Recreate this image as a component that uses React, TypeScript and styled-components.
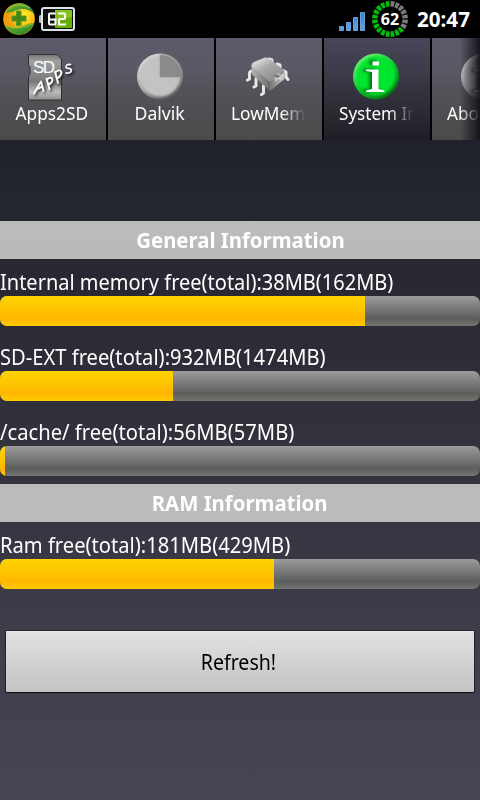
import React from 'react';
import styled, { createGlobalStyle } from 'styled-components';

const Global = createGlobalStyle`
  * { box-sizing: border-box; }
  body { margin: 0; background: #22242c; overflow: hidden; }
`;

const Screen = styled.main`
  width: 480px;
  height: 800px;
  display: flex;
  flex-direction: column;
  overflow: hidden;
  color: #fff;
  font-family: 'Noto Sans', 'Open Sans', sans-serif;
  background: linear-gradient(#20212a 140px, #24272d 210px, #292832 270px, #2d2d37 360px, #33323d 450px, #373743 540px, #3e3c48 620px, #434350 735px, #464454 800px);
`;

const StatusBar = styled.header`
  height: 38px;
  flex: none;
  display: flex;
  align-items: center;
  justify-content: space-between;
  background: #000;
`;

const StatusGroup = styled.div<{ $gap?: number }>`
  display: flex;
  gap: ${(p) => p.$gap ?? 0}px;
  height: 38px;
  align-items: flex-start;
`;

const Clock = styled.time`
  width: 55px;
  margin: 0 8px 0 3px;
  font: 700 20.6px/38px 'Noto Sans', sans-serif;
  white-space: nowrap;
`;

const TabStrip = styled.nav`
  height: 102px;
  flex: none;
  display: flex;
  gap: 2px;
  background: #000;
  overflow: hidden;
  position: relative;
  &::after {
    content: '';
    position: absolute;
    top: 0;
    right: 0;
    width: 20px;
    height: 102px;
    background: linear-gradient(90deg, rgba(0, 0, 0, 0), rgba(16, 17, 23, 0.95));
  }
`;

const Tab = styled.a<{ $active?: boolean }>`
  width: 106px;
  height: 102px;
  flex: none;
  padding: 14px 16px 0 14px;
  display: flex;
  flex-direction: column;
  align-items: center;
  background: ${(p) =>
    p.$active
      ? 'linear-gradient(#48465a, #3a3a47 38%, #2c2c35 70%, #1d1e25)'
      : 'linear-gradient(#5b596a, #595a65 28%, #515157 55%, #4b4b4c)'};
`;

const TabLabel = styled.span<{ $fade?: boolean }>`
  width: 76px;
  height: 24px;
  margin-top: -1px;
  padding-left: ${(p) => (p.$fade ? 1 : 0)}px;
  display: flex;
  justify-content: ${(p) => (p.$fade ? 'flex-start' : 'center')};
  overflow: hidden;
  font-size: 18px;
  line-height: 24px;
  white-space: nowrap;
  mask-image: ${(p) => (p.$fade ? 'linear-gradient(90deg, #000 51px, transparent 76px)' : 'none')};
`;

const Squeeze = styled.span<{ $scale: number; $origin?: string }>`
  display: inline-block;
  white-space: nowrap;
  transform: scaleX(${(p) => p.$scale});
  transform-origin: ${(p) => p.$origin ?? 'left'} center;
`;

const Content = styled.section`
  padding-top: 81px;
  display: flex;
  flex-direction: column;
`;

const SectionTitle = styled.h2<{ $tint?: boolean }>`
  height: 38px;
  margin: 0;
  text-align: center;
  font-size: 21px;
  font-weight: 700;
  line-height: 38px;
  background: ${(p) => (p.$tint ? 'linear-gradient(#babdba, #bbbcbb 45%, #bcb9bd 60%, #bcb9bd)' : '#bcbabd')};
`;

const Meter = styled.div`
  height: 75px;
  padding-top: 8px;
`;

const MeterLabel = styled.div`
  height: 29px;
  font-size: 22px;
  line-height: 29px;
`;

const Track = styled.div`
  height: 30px;
  border-radius: 7px;
  overflow: hidden;
  background: linear-gradient(#9b9c9b, #7d7f7c 35%, #5b5e5a 75%, #727570);
`;

const Fill = styled.div`
  height: 30px;
  background: linear-gradient(#ffd300, #ffc600 40%, #ffb600 75%, #ffcb00);
`;

const RefreshButton = styled.button`
  height: 61px;
  margin: 34px 6px 0;
  padding: 0 3px 0 0;
  border: 0;
  border-radius: 1px;
  color: #000;
  font: 400 21.500px/62px 'Noto Sans', sans-serif;
  background: linear-gradient(#e1e0e2, #d7d8d7 35%, #cbcccb 70%, #c3c4c6);
  box-shadow: 0 1px 1px #101015, 0 0 1px 1px #25252d, inset 0 1px #e9e7e9;
`;

const Ring = () => (
  <svg width="38" height="38" viewBox="0 0 38 38">
    {Array.from({ length: 20 }, (_, i) => (
      <path
        key={i}
        d="M16.900 1.200Q19 .8 21.100 1.200L20.500 6.600H17.500Z"
        fill={i < 7 ? '#7d7b7d' : '#00bd08'}
        transform={`rotate(${9 + i * 18} 19 19)`}
      />
    ))}
    <text x="19" y="25" textAnchor="middle" fontSize="16" fontWeight="700" fill="#fff" fontFamily="Noto Sans">62</text>
  </svg>
);

const Signal = () => (
  <svg width="27" height="38" viewBox="0 0 27 38">
    <defs>
      <linearGradient id="signal" x2="0" y2="1">
        <stop stopColor="#2f83dc" />
        <stop offset="1" stopColor="#5aa4e8" />
      </linearGradient>
    </defs>
    <g fill="url(#signal)" stroke="#6c9fd6" strokeWidth="1">
      <path d="M.5 26.500h4v4h-4zM7.500 22.500h4v8h-4zM14.500 17.500h4v13h-4zM21.500 12.500h4v18h-4z" />
    </g>
  </svg>
);

const Guard = () => (
  <svg width="38" height="38" viewBox="0 0 38 38">
    <defs>
      <radialGradient id="gold" cx=".65" cy=".4">
        <stop stopColor="#fff02a" />
        <stop offset=".6" stopColor="#ffc313" />
        <stop offset="1" stopColor="#f29c0c" />
      </radialGradient>
      <linearGradient id="leaf" x2="1" y2="1">
        <stop stopColor="#74b832" />
        <stop offset="1" stopColor="#1e7e26" />
      </linearGradient>
    </defs>
    <circle cx="19" cy="19" r="15.800" fill="url(#gold)" />
    <path d="M8 9C14 2 24 1 31 8Q34 11 34.500 14C29 9 23 8 17 10Q11 13 6 13Z" fill="url(#leaf)" />
    <path d="M5 25Q12 29 20 27C27 25 30 23 34 23C31 33 21 37 12 33Q7 30 5 25Z" fill="url(#leaf)" />
    <path d="M9 9Q19 1 30 8M7 26Q19 31 33 23.500" fill="none" stroke="#a5cf3c" strokeWidth=".8" />
    <path d="M16.500 11h4.500v5h5v5h-5v4.500h-4.500V21h-4.500v-5h4.500z" fill="#438719" stroke="#5a9a1b" strokeWidth="1" strokeLinejoin="round" />
  </svg>
);

const Battery = () => (
  <svg width="38" height="38" viewBox="0 0 38 38">
    <rect x="1" y="15" width="4" height="8" rx="1.500" fill="#b8c4cc" />
    <rect x="4" y="8" width="32" height="22" rx="2" fill="#111" stroke="#dce4ea" strokeWidth="2" />
    <path d="M17 10h17v18H17z" fill="#67ad08" />
    <path d="M17 10h17v7l-17 4z" fill="#82c51b" />
    <path d="M17.500 13.500H12q-1 0-1 1v9q0 1 1 1h4.500q1 0 1-1v-4H11.500M20 13.500h6q1 0 1 1V18q0 1-1 1h-4q-1 0-1 1v4.500h7" fill="none" stroke="#fff" strokeWidth="2" />
  </svg>
);

const SdIcon = () => (
  <svg width="48" height="50" viewBox="0 0 48 50">
    <defs>
      <linearGradient id="card" x2="0" y2="1">
        <stop stopColor="#777" />
        <stop offset=".15" stopColor="#a0a0a0" />
        <stop offset=".6" stopColor="#777" />
        <stop offset=".82" stopColor="#bdbdbd" />
        <stop offset="1" stopColor="#8e8e8e" />
      </linearGradient>
      <filter id="inkShadow" x="-20%" y="-20%" width="150%" height="150%">
        <feDropShadow dx="1.500" dy="1.500" stdDeviation="1" floodColor="#111" floodOpacity=".9" />
      </filter>
    </defs>
    <path d="M.5 2.500h28.500l4.500 4.500v41H.5V24l1.500-2V15l-1.500-2z" fill="url(#card)" stroke="#303033" />
    <text x="5" y="21" fontFamily="Liberation Sans" fontSize="17" textLength="22" fill="#fff">SD</text>
    <g filter="url(#inkShadow)" fill="none" stroke="#fff" strokeWidth="1.700" strokeLinecap="round" strokeLinejoin="round">
      <path d="M6 41.500L13 29.500L15.500 39M8.500 37.500L14.500 34.500" />
      <path d="M18.500 26.500L21.500 37.500M18.500 27.500Q24 23.500 24.500 28Q24 31.500 20.500 32.500" />
      <path d="M27 19.500L30 31M27 20.500Q32.500 16 33.500 20.500Q33 24.500 29.500 26" />
      <path d="M42.500 12.500Q38 12 38 15Q38.500 16.500 41.500 16.500Q44.500 17.500 42.500 20Q41 21.500 38 21" />
    </g>
  </svg>
);

const PieIcon = () => (
  <svg width="48" height="50" viewBox="0 0 48 50">
    <defs>
      <linearGradient id="rim" x1=".2" x2=".8" y2="1">
        <stop stopColor="#e0e2e0" />
        <stop offset=".5" stopColor="#a8aaa8" />
        <stop offset="1" stopColor="#4e504f" />
      </linearGradient>
      <filter id="pieBlur"><feGaussianBlur stdDeviation="1" /></filter>
    </defs>
    <circle cx="24" cy="24.500" r="23" fill="url(#rim)" />
    <g filter="url(#pieBlur)">
      <circle cx="24" cy="24" r="20.500" fill="#c1c4c1" />
      <path d="M24 2A22 22 0 0 1 46 25H24Z" fill="#888b88" />
    </g>
    <path d="M24 3.500A20.500 20.500 0 0 1 44.500 25H24Z" fill="#888b88" />
  </svg>
);

const ChipIcon = () => (
  <svg width="48" height="50" viewBox="0 0 48 50">
    <defs>
      <linearGradient id="chipTop" x1=".15" y1=".1" x2=".8" y2=".9">
        <stop stopColor="#e0e1e0" />
        <stop offset=".4" stopColor="#a9aaa9" />
        <stop offset="1" stopColor="#8a8c8a" />
      </linearGradient>
      <linearGradient id="chipFront" x1="0" x2="1">
        <stop stopColor="#b4b5b4" />
        <stop offset="1" stopColor="#6a6c6a" />
      </linearGradient>
      <linearGradient id="chipSide" x1="0" x2="1">
        <stop stopColor="#737573" />
        <stop offset="1" stopColor="#c9cac9" />
      </linearGradient>
    </defs>
    <g fill="none" stroke="#e6e7e6" strokeWidth="3" strokeLinecap="round" strokeLinejoin="round">
      <path d="M25 7l3 1v3M33 12l3 1v3M39 18.500l3 1.500v5l2 2.500" />
      <path d="M8 19q-3 0-2.500 4v4l-2 1M14.500 25q-3 0-2.500 4v5l-2 1M22 32q-3 0-2.500 4v5l-2 1.500" />
    </g>
    <path d="M7.500 13L26 29.500V39L8.500 23Q7.500 21 7.500 13Z" fill="url(#chipFront)" />
    <path d="M26 29L40.500 19.500V27L26 39Z" fill="url(#chipSide)" />
    <path d="M7.500 13Q8 11 10 10L21 5.500Q24 5 26 7L40 18.500Q41 20 39 21.500L27 29.500Q25.500 30 24 28.500L9 16Q7.500 15 7.500 13Z" fill="url(#chipTop)" />
    <path d="M30 25l3-1.500 1.500-3 1.500 2.500 4-1-3 3 1 3-4-1-3 3V27z" fill="#dedfde" opacity=".75" />
    <path d="M29 24l5-1 3 1-4 2z" fill="#737573" />
  </svg>
);

const InfoIcon = ({ green = false }: { green?: boolean }) => {
  const id = green ? 'greenInfo' : 'greyInfo';
  return (
    <svg width="48" height="50" viewBox="0 0 48 50">
      <defs>
        <linearGradient id={id} x1=".15" y1=".05" x2=".85" y2="1">
          <stop stopColor={green ? '#76f47f' : '#ddd'} />
          <stop offset=".5" stopColor={green ? '#08c828' : '#999'} />
          <stop offset="1" stopColor={green ? '#005b0c' : '#444'} />
        </linearGradient>
        <filter id={id + 'Soft'} x="-30%" y="-30%" width="160%" height="160%"><feGaussianBlur stdDeviation="1.500" /></filter>
      </defs>
      <circle cx="24" cy="24.500" r="23" fill={`url(#${id})`} />
      <circle cx="24" cy="24" r="19.500" fill={green ? '#05e52d' : '#aaa'} filter={`url(#${id}Soft)`} />
      <g transform="translate(-3 -1)" fill={green ? '#057d19' : '#555'} filter={`url(#${id}Soft)`}>
        <path d="M20 9h7v5h-7zM14 18h13v20h5v3H14v-3h6V21h-6z" />
      </g>
      <path d="M20.500 9.500h6.500v4h-6.500zM14 17.500h12.500v19.500l6 1.500v1.500H14V38.500l6-1.500V20l-6-1z" fill={green ? '#fff' : '#ccc'} />
    </svg>
  );
};

const TABS = [
  { label: 'Apps2SD', scale: 0.96, icon: <SdIcon /> },
  { label: 'Dalvik', scale: 0.98, icon: <PieIcon /> },
  { label: 'LowMem', scale: 0.96, fade: true, icon: <ChipIcon /> },
  { label: 'System Info', scale: 0.95, fade: true, active: true, icon: <InfoIcon green /> },
  { label: 'About', scale: 0.95, fade: true, icon: <InfoIcon /> },
];

const STORAGE = [
  { label: 'Internal memory free(total):38MB(162MB)', scale: 0.909, used: 365 },
  { label: 'SD-EXT free(total):932MB(1474MB)', scale: 0.916, used: 173 },
  { label: '/cache/ free(total):56MB(57MB)', scale: 0.917, used: 5 },
];

const RAM = { label: 'Ram free(total):181MB(429MB)', scale: 0.916, used: 274 };

const MemoryMeter = ({ label, scale, used }: { label: string; scale: number; used: number }) => (
  <Meter>
    <MeterLabel><Squeeze $scale={scale}>{label}</Squeeze></MeterLabel>
    <Track><Fill style={{ width: used }} /></Track>
  </Meter>
);

export default function App() {
  return (
    <>
      <Global />
      <Screen>
        <StatusBar>
          <StatusGroup><Guard /><Battery /></StatusGroup>
          <StatusGroup $gap={5}><Signal /><Ring /><Clock>20:47</Clock></StatusGroup>
        </StatusBar>
        <TabStrip>
          {TABS.map((t) => (
            <Tab key={t.label} $active={t.active}>
              {t.icon}
              <TabLabel $fade={t.fade}>
                <Squeeze $scale={t.scale} $origin={t.fade ? 'left' : 'center'}>{t.label}</Squeeze>
              </TabLabel>
            </Tab>
          ))}
        </TabStrip>
        <Content>
          <SectionTitle $tint><Squeeze $scale={0.97} $origin="center">General Information</Squeeze></SectionTitle>
          {STORAGE.map((m) => <MemoryMeter key={m.label} {...m} />)}
          <SectionTitle><Squeeze $scale={0.97} $origin="center">RAM Information</Squeeze></SectionTitle>
          <MemoryMeter {...RAM} />
          <RefreshButton><Squeeze $scale={0.91} $origin="center">Refresh!</Squeeze></RefreshButton>
        </Content>
      </Screen>
    </>
  );
}
